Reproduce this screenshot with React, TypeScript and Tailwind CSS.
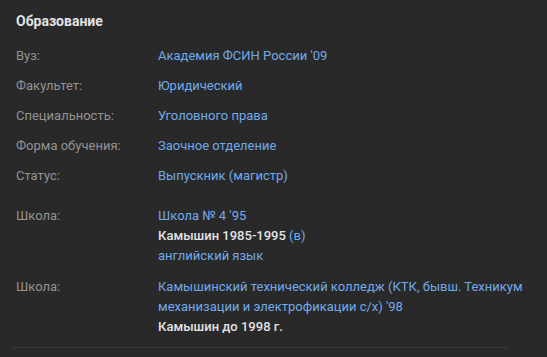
import React from "react";

type Row = { label: string; lines: React.ReactNode[] };

const link = "text-[#71aaeb]";
const strong = "font-medium text-[#e1e3e6]";

const mainRows: Row[] = [
  { label: "Вуз:", lines: [<span className={link}>Академия ФСИН России '09</span>] },
  { label: "Факультет:", lines: [<span className={link}>Юридический</span>] },
  { label: "Специальность:", lines: [<span className={link}>Уголовного права</span>] },
  { label: "Форма обучения:", lines: [<span className={link}>Заочное отделение</span>] },
  { label: "Статус:", lines: [<span className={link}>Выпускник (магистр)</span>] },
];

const schoolRows: Row[] = [
  {
    label: "Школа:",
    lines: [
      <span className={link}>Школа № 4 '95</span>,
      <span className={strong}>
        Камышин 1985-1995 <span className={`${link} font-normal`}>(в)</span>
      </span>,
      <span className={link}>английский язык</span>,
    ],
  },
  {
    label: "Школа:",
    lines: [
      <span className={link}>
        Камышинский технический колледж (КТК, бывш. Техникум механизации и электрофикации с/х) '98
      </span>,
      <span className={strong}>Камышин до 1998 г.</span>,
    ],
  },
];

function InfoRow({ row }: { row: Row }) {
  return (
    <div className="flex leading-[20px]">
      <div className="w-[142px] flex-none text-[#939393]">{row.label}</div>
      <div className="flex-1 flex flex-col">
        {row.lines.map((l, i) => (
          <div key={i}>{l}</div>
        ))}
      </div>
    </div>
  );
}

export default function App() {
  return (
    <div className="w-[547px] h-[357px] bg-[#292929] overflow-hidden font-['Roboto',sans-serif] text-[13px]">
      <div className="pl-[16px] pr-[8px] pt-[12px]">
        <h2 className="text-[14px] leading-[18px] font-bold text-[#e1e3e6]">Образование</h2>
        <div className="mt-[16px] flex flex-col gap-[10px]">
          {mainRows.map((r, i) => (
            <InfoRow key={i} row={r} />
          ))}
        </div>
        <div className="mt-[20px] flex flex-col gap-[11px]">
          {schoolRows.map((r, i) => (
            <InfoRow key={i} row={r} />
          ))}
        </div>
      </div>
      <div className="ml-[12px] mt-[10px] mr-[39px] h-px bg-[#3a3a3a]" />
    </div>
  );
}
